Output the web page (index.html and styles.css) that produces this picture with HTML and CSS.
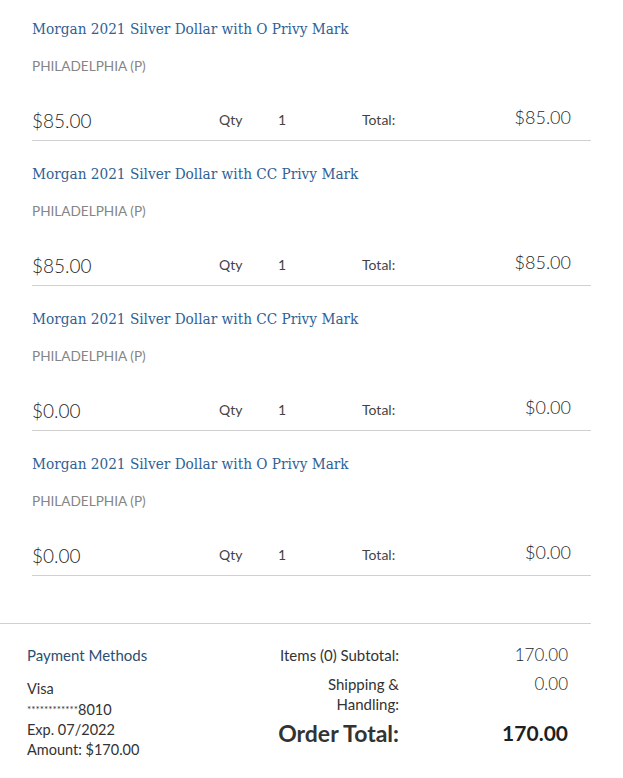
FILE: index.html
```html
<!DOCTYPE html>
<html>
<head>
<meta charset="utf-8">
<link rel="stylesheet" href="styles.css">
</head>
<body>
<div class="items">
  <div class="item">
    <div class="title">Morgan 2021 Silver Dollar with O Privy Mark</div>
    <div class="mint">PHILADELPHIA (P)</div>
    <div class="row">
      <div class="price">$85.00</div>
      <div class="qty-label">Qty</div>
      <div class="qty">1</div>
      <div class="total-label">Total:</div>
      <div class="total">$85.00</div>
    </div>
  </div>
  <div class="item">
    <div class="title">Morgan 2021 Silver Dollar with CC Privy Mark</div>
    <div class="mint">PHILADELPHIA (P)</div>
    <div class="row">
      <div class="price">$85.00</div>
      <div class="qty-label">Qty</div>
      <div class="qty">1</div>
      <div class="total-label">Total:</div>
      <div class="total">$85.00</div>
    </div>
  </div>
  <div class="item">
    <div class="title">Morgan 2021 Silver Dollar with CC Privy Mark</div>
    <div class="mint">PHILADELPHIA (P)</div>
    <div class="row">
      <div class="price">$0.00</div>
      <div class="qty-label">Qty</div>
      <div class="qty">1</div>
      <div class="total-label">Total:</div>
      <div class="total">$0.00</div>
    </div>
  </div>
  <div class="item">
    <div class="title">Morgan 2021 Silver Dollar with O Privy Mark</div>
    <div class="mint">PHILADELPHIA (P)</div>
    <div class="row">
      <div class="price">$0.00</div>
      <div class="qty-label">Qty</div>
      <div class="qty">1</div>
      <div class="total-label">Total:</div>
      <div class="total">$0.00</div>
    </div>
  </div>
</div>
<div class="footer">
  <div class="payment">
    <div class="pay-title">Payment Methods</div>
    <div class="pay-lines">
      <div>Visa</div>
      <div><span class="stars">************</span>8010</div>
      <div>Exp. 07/2022</div>
      <div>Amount: $170.00</div>
    </div>
  </div>
  <div class="summary">
    <div class="s-label">Items (0) Subtotal:</div>
    <div class="s-value">170.00</div>
    <div class="s-label">Shipping &amp;<br>Handling:</div>
    <div class="s-value">0.00</div>
    <div class="s-label grand">Order Total:</div>
    <div class="s-value grand">170.00</div>
  </div>
</div>
</body>
</html>
```
FILE: styles.css
```css
html, body {
  margin: 0;
  padding: 0;
  background: #fff;
}
body {
  font-family: "Lato", "Liberation Sans", sans-serif;
  color: #333;
  width: 623px;
}
.items {
  padding-left: 32px;
  width: 559px;
}
.item {
  padding-top: 23px;
  border-bottom: 1px solid #d0d0d0;
}
.item:first-child {
  padding-top: 19px;
}
.title {
  font-family: "DejaVu Serif Condensed", "DejaVu Serif", serif;
  font-stretch: condensed;
  font-size: 15.2px;
  line-height: 20px;
  color: #2f6195;
}
.mint {
  margin-top: 17px;
  font-size: 13.6px;
  line-height: 20px;
  color: #858585;
}
.row {
  display: grid;
  grid-template-columns: 187px 59px 84px 1fr auto;
  align-items: center;
  margin-top: 24px;
  height: 40px;
  padding-right: 20px;
}
.price {
  font-size: 19px;
  font-weight: 300;
  color: #1f1f1f;
}
.qty-label, .qty {
  font-size: 14px;
  color: #444;
  padding-bottom: 2px;
}
.total-label {
  font-size: 14px;
  color: #444;
  padding-bottom: 2px;
}
.total {
  font-size: 18px;
  font-weight: 300;
  color: #1f1f1f;
  padding-bottom: 6px;
}
.footer {
  margin-top: 47px;
  width: 591px;
  border-top: 1px solid #d0d0d0;
  display: flex;
  align-items: flex-start;
  padding-top: 21px;
}
.payment {
  padding-left: 27px;
  width: 190px;
}
.pay-title {
  color: #2b4f73;
  font-size: 15px;
  line-height: 20px;
}
.pay-lines {
  margin-top: 14px;
  font-size: 14.5px;
  line-height: 20px;
  color: #333;
}
.stars {
  font-size: 10px;
  vertical-align: 2px;
}
.summary {
  display: grid;
  grid-template-columns: 182px 169px;
  row-gap: 9px;
  align-content: start;
  align-items: start;
  color: #333;
}
.s-label {
  text-align: right;
  font-size: 15px;
  line-height: 20px;
}
.s-value {
  text-align: right;
  font-size: 17px;
  font-weight: 300;
  line-height: 20px;
  color: #1f1f1f;
}
.s-label.grand {
  font-size: 23px;
  font-weight: 700;
  line-height: 20px;
}
.s-value.grand {
  font-size: 21px;
  font-weight: 700;
  line-height: 20px;
}
```
